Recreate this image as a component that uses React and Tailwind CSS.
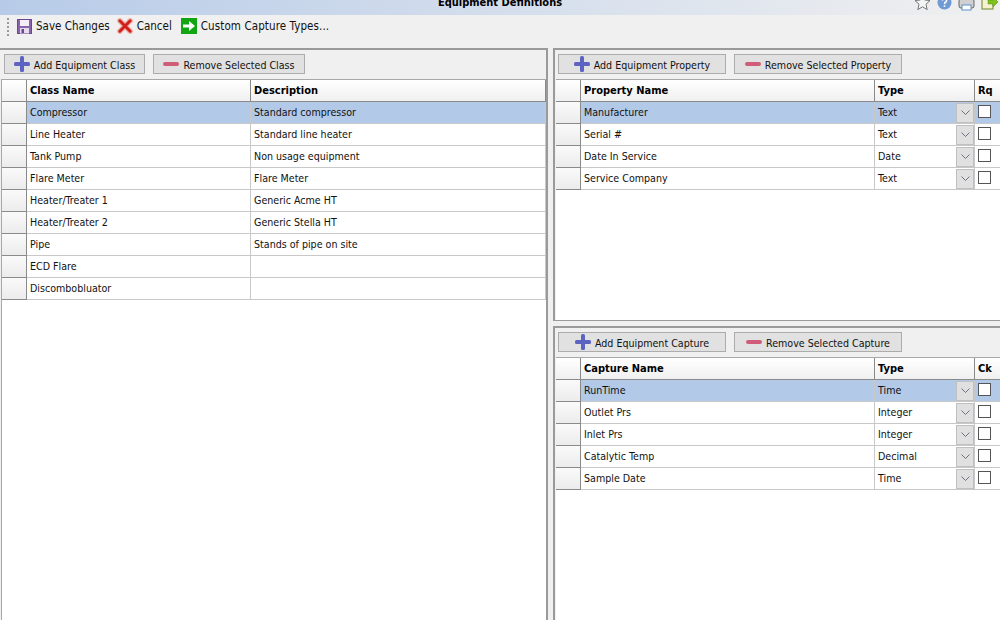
import React from 'react';

const classes = [
  ['Compressor', 'Standard compressor'],
  ['Line Heater', 'Standard line heater'],
  ['Tank Pump', 'Non usage equipment'],
  ['Flare Meter', 'Flare Meter'],
  ['Heater/Treater 1', 'Generic Acme HT'],
  ['Heater/Treater 2', 'Generic Stella HT'],
  ['Pipe', 'Stands of pipe on site'],
  ['ECD Flare', ''],
  ['Discombobluator', ''],
];

const properties = [
  ['Manufacturer', 'Text'],
  ['Serial #', 'Text'],
  ['Date In Service', 'Date'],
  ['Service Company', 'Text'],
];

const captures = [
  ['RunTime', 'Time'],
  ['Outlet Prs', 'Integer'],
  ['Inlet Prs', 'Integer'],
  ['Catalytic Temp', 'Decimal'],
  ['Sample Date', 'Time'],
];

const PlusIcon = () => (
  <svg width="16" height="16" viewBox="0 0 16 16" className="shrink-0">
    <rect x="6" y="0" width="4" height="16" rx="1.5" fill="#5b64c0" />
    <rect x="0" y="6" width="16" height="4" rx="1.5" fill="#5b64c0" />
  </svg>
);

const MinusIcon = () => (
  <svg width="16" height="16" viewBox="0 0 16 16" className="shrink-0">
    <rect x="0" y="6" width="16" height="4" rx="2" fill="#cf5c78" />
  </svg>
);

const SaveIcon = () => (
  <svg width="15" height="15" viewBox="0 0 15 15" className="shrink-0">
    <rect x="0.5" y="0.5" width="14" height="14" fill="#8a63ab" stroke="#6c4690" />
    <rect x="3" y="1" width="9" height="6" fill="#f3eef7" />
    <rect x="3" y="9" width="9" height="5.5" fill="#e4dcec" />
    <rect x="4.5" y="10" width="2.5" height="4" fill="#6c4690" />
  </svg>
);

const CancelIcon = () => (
  <svg width="16" height="16" viewBox="0 0 16 16" className="shrink-0">
    <path d="M2.8 2.8 L13.2 13.2 M13.2 2.8 L2.8 13.2" stroke="#eeb4ad" strokeWidth="5.5" strokeLinecap="round" />
    <path d="M2.8 2.8 L13.2 13.2 M13.2 2.8 L2.8 13.2" stroke="#d0201c" strokeWidth="3" strokeLinecap="round" />
  </svg>
);

const ArrowBoxIcon = () => (
  <svg width="16" height="16" viewBox="0 0 16 16" className="shrink-0">
    <rect width="16" height="16" fill="#12a512" />
    <path d="M2 6.5 H8 V3 L14 8 L8 13 V9.5 H2 Z" fill="#ffffff" />
  </svg>
);

const Chevron = () => (
  <svg width="9" height="5" viewBox="0 0 9 5">
    <path d="M0.5 0.5 L4.5 4.5 L8.5 0.5" fill="none" stroke="#6b7280" strokeWidth="1" />
  </svg>
);

const ToolButton = ({ icon, label, className }) => (
  <div className={`h-5 flex items-center justify-center gap-1 whitespace-nowrap border border-[#acacac] bg-[#e1e1e1] ${className}`}>
    {icon}
    <span className="pt-1">{label}</span>
  </div>
);

const HeaderCell = ({ className, children }) => (
  <div className={`h-[21px] flex items-center pl-[3px] pt-[2px] text-[11px] font-bold text-black bg-gradient-to-b from-white to-[#f0f0f0] border-r border-[#8a8a8a] ${className}`}>
    {children}
  </div>
);

const RowHead = ({ className }) => (
  <div className={`h-[22px] shrink-0 bg-gradient-to-b from-[#fafafa] to-[#ececec] border-r border-b border-[#8a8a8a] ${className}`} />
);

const ClassTable = () => (
  <div className="flex-1 ml-px bg-white border-t border-l border-[#a8a8a8]">
    <div className="flex border-b border-[#8a8a8a]">
      <HeaderCell className="w-[25px] !pl-0" />
      <HeaderCell className="w-[224px]">Class Name</HeaderCell>
      <HeaderCell className="flex-1">Description</HeaderCell>
    </div>
    {classes.map(([name, desc], index) => (
      <div key={name} className={`h-[22px] flex ${index === 0 ? 'bg-[#b3c9e8]' : ''}`}>
        <RowHead className="w-[25px]" />
        <div className="w-[224px] flex items-center pl-[3px] border-r border-b border-[#c8c8c8]">{name}</div>
        <div className="flex-1 flex items-center pl-[3px] border-r border-b border-[#c8c8c8]">{desc}</div>
      </div>
    ))}
  </div>
);

const TypedTable = ({ nameTitle, flagTitle, rows }) => (
  <div className="flex-1 ml-px bg-white border-t border-[#a8a8a8]">
    <div className="flex border-b border-[#8a8a8a]">
      <HeaderCell className="w-[25px] !pl-0" />
      <HeaderCell className="w-[294px]">{nameTitle}</HeaderCell>
      <HeaderCell className="w-[100px]">Type</HeaderCell>
      <HeaderCell className="flex-1 !border-r-0">{flagTitle}</HeaderCell>
    </div>
    {rows.map(([name, type], index) => (
      <div key={name} className={`h-[22px] flex ${index === 0 ? 'bg-[#b3c9e8]' : ''}`}>
        <RowHead className="w-[25px]" />
        <div className="w-[294px] flex items-center pl-[3px] border-r border-b border-[#c8c8c8]">{name}</div>
        <div className="w-[100px] flex items-center justify-between pl-[3px] border-r border-b border-[#c8c8c8]">
          <span>{type}</span>
          <div className="w-[18px] h-5 flex items-center justify-center bg-[#e0e0e0] border border-[#c0c0c0]">
            <Chevron />
          </div>
        </div>
        <div className="flex-1 flex items-center pl-[3px] pb-[2px] border-b border-[#c8c8c8]">
          <div className="w-[13px] h-[13px] bg-white border border-[#555555]" />
        </div>
      </div>
    ))}
  </div>
);

const RightPanel = ({ className, addLabel, removeLabel, nameTitle, flagTitle, rows }) => (
  <div className={`flex flex-col border-t-2 border-l-2 border-[#9a9a9a] ${className}`}>
    <div className="h-[29px] flex items-start gap-2 pt-1 pl-[3px] shrink-0">
      <ToolButton icon={<PlusIcon />} label={addLabel} className="w-[168px]" />
      <ToolButton icon={<MinusIcon />} label={removeLabel} className="w-[168px]" />
    </div>
    <TypedTable nameTitle={nameTitle} flagTitle={flagTitle} rows={rows} />
  </div>
);

export default function App() {
  return (
    <div className="w-[1000px] h-[620px] overflow-hidden flex flex-col bg-[#f0f0f0] text-[10.6px] text-[#111111] font-['DejaVu_Sans','Liberation_Sans',sans-serif] [font-stretch:condensed]">
      {/* title bar, cut off at the top of the window */}
      <div className="h-[15px] shrink-0 relative overflow-hidden bg-gradient-to-r from-[#b7cbe8] to-[#f0f0f0]">
        <div className="text-center text-[11px] font-bold leading-none -mt-[3px] text-black">Equipment Definitions</div>
        <div className="absolute right-0 -top-[6px] flex items-center gap-[6px] pr-px">
          <svg width="17" height="17" viewBox="0 0 17 17">
            <path d="M8.5 1 L10.7 6 L16 6.6 L12 10.2 L13.2 15.6 L8.5 12.8 L3.8 15.6 L5 10.2 L1 6.6 L6.3 6 Z" fill="#f4f4f4" stroke="#777777" />
          </svg>
          <svg width="15" height="15" viewBox="0 0 15 15">
            <circle cx="7.5" cy="7.5" r="7" fill="#6f9ad6" />
            <path d="M5.5 5.5 A2 2 0 1 1 8 7.5 L7.5 9" fill="none" stroke="#ffffff" strokeWidth="1.6" />
            <rect x="6.7" y="10.2" width="1.6" height="1.6" fill="#ffffff" />
          </svg>
          <svg width="17" height="17" viewBox="0 0 17 17">
            <rect x="1" y="5" width="15" height="9" rx="2" fill="#d0d0d0" stroke="#666666" />
            <rect x="4" y="11" width="9" height="5" fill="#ffffff" stroke="#5a8fc8" />
          </svg>
          <svg width="18" height="17" viewBox="0 0 18 17">
            <rect x="1" y="2" width="11" height="13" fill="#f6f2d0" stroke="#6b8a2a" />
            <path d="M7 6 H12 V3 L17 8 L12 13 V10 H7 Z" fill="#7fc41c" stroke="#4d8a10" strokeWidth="0.5" />
          </svg>
        </div>
      </div>

      {/* toolbar */}
      <div className="h-[33px] shrink-0 flex items-start pt-[3px] text-[11.5px]">
        <div className="ml-[7px] h-[18px] border-l-2 border-dotted border-[#9a9a9a]" />
        <div className="flex items-center h-4 ml-2">
          <div className="flex items-center gap-1"><SaveIcon /><span className="pt-[2px]">Save Changes</span></div>
          <div className="flex items-center gap-1 ml-[7px]"><CancelIcon /><span className="pt-[2px]">Cancel</span></div>
          <div className="flex items-center gap-1 ml-[9px]"><ArrowBoxIcon /><span className="pt-[2px] tracking-[0.1px]">Custom Capture Types...</span></div>
        </div>
      </div>

      <div className="flex-1 flex min-h-0">
        {/* left panel */}
        <div className="w-[548px] flex flex-col border-t-2 border-r-2 border-[#9a9a9a]">
          <div className="h-[29px] flex items-start gap-2 pt-1 pl-1 shrink-0">
            <ToolButton icon={<PlusIcon />} label="Add Equipment Class" className="w-[141px]" />
            <ToolButton icon={<MinusIcon />} label="Remove Selected Class" className="w-[152px]" />
          </div>
          <ClassTable />
        </div>

        <div className="w-[5px] shrink-0" />

        {/* right panels */}
        <div className="flex-1 flex flex-col min-w-0">
          <RightPanel
            className="h-[272px] shrink-0"
            addLabel="Add Equipment Property"
            removeLabel="Remove Selected Property"
            nameTitle="Property Name"
            flagTitle="Rq"
            rows={properties}
          />
          <div className="h-[6px] shrink-0 border-t border-[#9a9a9a]" />
          <RightPanel
            className="flex-1"
            addLabel="Add Equipment Capture"
            removeLabel="Remove Selected Capture"
            nameTitle="Capture Name"
            flagTitle="Ck"
            rows={captures}
          />
        </div>
      </div>
    </div>
  );
}
